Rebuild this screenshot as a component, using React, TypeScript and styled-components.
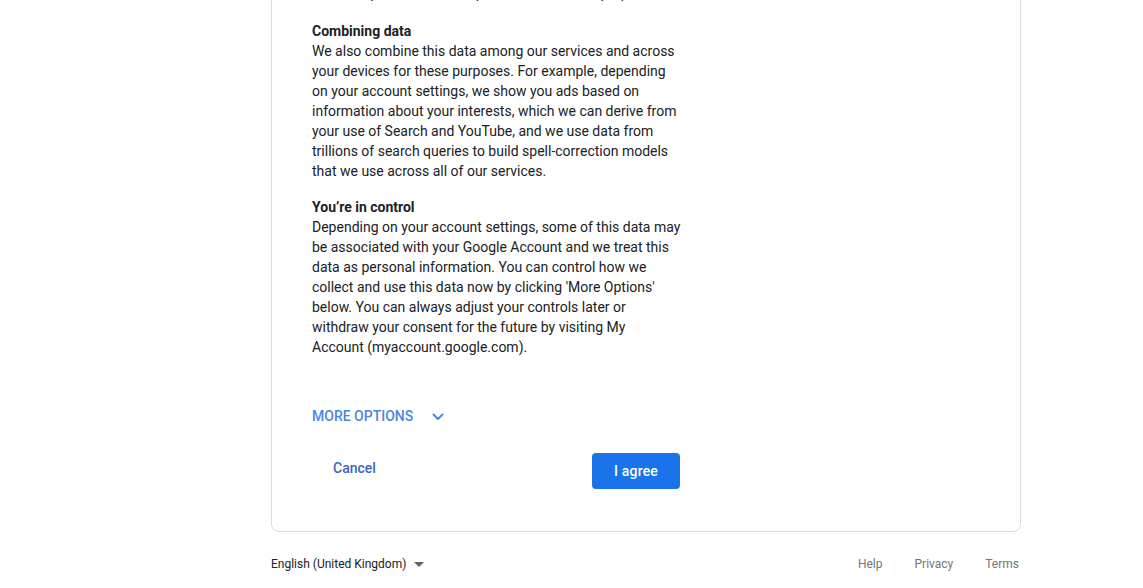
import React from "react";
import styled, { createGlobalStyle } from "styled-components";

const Global = createGlobalStyle`
  html, body { margin: 0; padding: 0; background: #fff; overflow: hidden; }
  body { font-family: Roboto, "Liberation Sans", Arial, sans-serif; color: #202124; }
`;

const Page = styled.div`
  padding-left: 271px;
  width: 750px;
`;

const Card = styled.div`
  margin-top: -58px;
  border: 1px solid #dadce0;
  border-radius: 8px;
  padding: 40px 40px 42px 40px;
`;

const Column = styled.div`
  width: 372px;
`;

const Section = styled.div<{ $gapAfter?: number }>`
  font-size: 14px;
  line-height: 20px;
  color: #202124;
  margin-bottom: ${(p) => p.$gapAfter ?? 16}px;
  &:last-of-type { margin-bottom: 0; }
`;

const Heading = styled.div`
  font-weight: 700;
`;

const Line = styled.div`
  font-weight: 400;
  white-space: nowrap;
`;

const MoreRow = styled.div`
  margin-top: 47px;
  height: 24px;
  display: flex;
  align-items: center;
  gap: 17px;
  color: #4a86e0;
  font-size: 14px;
  font-weight: 500;
`;

const Chevron = styled.svg`
  width: 16px;
  height: 16px;
  margin-top: 2px;
`;

const Actions = styled.div`
  margin-top: 25px;
  padding-right: 4px;
  display: flex;
  justify-content: space-between;
  align-items: flex-start;
`;

const TextButton = styled.div`
  padding: 6px 21px 0;
  height: 24px;
  line-height: 18px;
  color: #3a67bd;
  font-size: 14px;
  font-weight: 500;
`;

const PrimaryButton = styled.div`
  width: 88px;
  height: 36px;
  border-radius: 4px;
  background: #1a73e8;
  color: #fff;
  font-size: 14px;
  font-weight: 500;
  display: flex;
  align-items: center;
  justify-content: center;
  letter-spacing: 0.2px;
`;

const Footer = styled.div`
  margin-top: 24px;
  display: flex;
  justify-content: space-between;
  align-items: center;
  font-size: 12px;
  line-height: 16px;
`;

const Lang = styled.div`
  display: flex;
  align-items: center;
  gap: 8px;
  color: #202124;
`;

const Caret = styled.span`
  width: 0;
  height: 0;
  border-left: 5px solid transparent;
  border-right: 5px solid transparent;
  border-top: 5px solid #5f6368;
  margin-top: 1px;
`;

const Links = styled.div`
  display: flex;
  gap: 32px;
  color: #757575;
  padding-right: 2px;
`;

const combining = [
  "We also combine this data among our services and across",
  "your devices for these purposes. For example, depending",
  "on your account settings, we show you ads based on",
  "information about your interests, which we can derive from",
  "your use of Search and YouTube, and we use data from",
  "trillions of search queries to build spell-correction models",
  "that we use across all of our services.",
];

const control = [
  "Depending on your account settings, some of this data may",
  "be associated with your Google Account and we treat this",
  "data as personal information. You can control how we",
  "collect and use this data now by clicking 'More Options'",
  "below. You can always adjust your controls later or",
  "withdraw your consent for the future by visiting My",
  "Account (myaccount.google.com).",
];

export default function App() {
  return (
    <>
      <Global />
      <Page>
        <Card>
          <Column>
            <Section $gapAfter={18}>
              <Line>and to improve and develop new ones, and for purposes</Line>
            </Section>
            <Section>
              <Heading>Combining data</Heading>
              {combining.map((l) => (
                <Line key={l}>{l}</Line>
              ))}
            </Section>
            <Section>
              <Heading>You’re in control</Heading>
              {control.map((l) => (
                <Line key={l}>{l}</Line>
              ))}
            </Section>
            <MoreRow>
              <span>MORE OPTIONS</span>
              <Chevron viewBox="0 0 16 16">
                <path d="M3.5 5.5 L8 10 L12.5 5.5" fill="none" stroke="#4a86e0" strokeWidth="2" strokeLinecap="round" strokeLinejoin="round" />
              </Chevron>
            </MoreRow>
            <Actions>
              <TextButton>Cancel</TextButton>
              <PrimaryButton>I agree</PrimaryButton>
            </Actions>
          </Column>
        </Card>
        <Footer>
          <Lang>
            <span>English (United Kingdom)</span>
            <Caret />
          </Lang>
          <Links>
            <span>Help</span>
            <span>Privacy</span>
            <span>Terms</span>
          </Links>
        </Footer>
      </Page>
    </>
  );
}
